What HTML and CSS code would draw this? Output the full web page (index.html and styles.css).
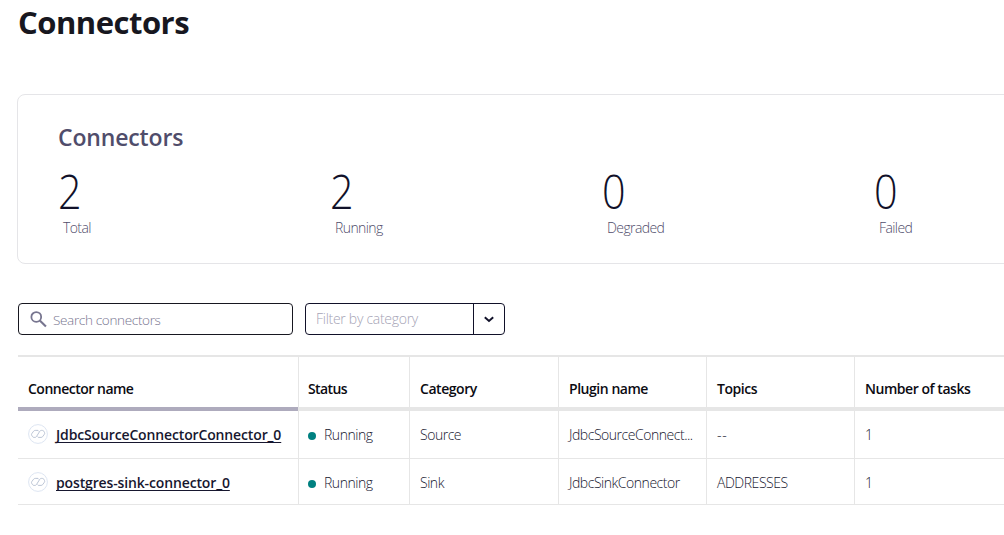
FILE: index.html
```html
<!DOCTYPE html>
<html lang="en">
<head>
<meta charset="utf-8">
<title>Connectors</title>
<link rel="stylesheet" href="styles.css">
</head>
<body>
<svg width="0" height="0" class="defs">
  <symbol id="link" viewBox="0 0 20 20">
    <circle cx="10" cy="10" r="9.4" fill="#fff" stroke="#dde5f2" stroke-width="1"/>
    <path d="M10.8 7.4 10 6.4H7.2Q6.2 6.4 5.6 7.2L3.8 9.6Q3.2 10.4 3.7 11.3L4.5 12.6Q5 13.4 6 13.4H6.9Q7.9 13.4 8.5 12.5L11.7 7.4Q12.3 6.4 13.4 6.4H14.4Q15.3 6.4 15.8 7.2L16.5 8.5Q17 9.3 16.4 10.2L14.7 12.6Q14.1 13.4 13.1 13.4H10.3L9.6 12.5" fill="none" stroke="#b4bed0" stroke-width=".9"/>
  </symbol>
</svg>
<main class="page">
  <h1 class="title">Connectors</h1>
  <section class="summary">
    <h2 class="summary-title">Connectors</h2>
    <div class="stats">
      <div class="stat"><div class="value">2</div><div class="label">Total</div></div>
      <div class="stat"><div class="value">2</div><div class="label">Running</div></div>
      <div class="stat"><div class="value">0</div><div class="label">Degraded</div></div>
      <div class="stat"><div class="value">0</div><div class="label">Failed</div></div>
    </div>
  </section>
  <div class="filters">
    <div class="search">
      <svg class="search-icon" viewBox="0 0 16 16"><circle cx="5.9" cy="5.6" r="4.6" fill="none" stroke="#77758f" stroke-width="1.7"/><path d="M9.2 9 15 14.6" stroke="#77758f" stroke-width="2"/></svg>
      <span class="placeholder">Search connectors</span>
    </div>
    <div class="select">
      <span class="select-text">Filter by category</span>
      <span class="toggle"><svg width="10" height="7" viewBox="0 0 10 7"><path d="M.8 1.2 5 5 9.2 1.2" fill="none" stroke="#111129" stroke-width="1.9"/></svg></span>
    </div>
  </div>
  <div class="table">
    <div class="row head">
      <div class="cell sorted">Connector name</div><div class="cell status">Status</div><div class="cell">Category</div><div class="cell">Plugin name</div><div class="cell">Topics</div><div class="cell">Number of tasks</div>
    </div>
    <div class="row first">
      <div class="cell"><svg class="link-icon"><use href="#link"/></svg><a class="name">JdbcSourceConnectorConnector_0</a></div><div class="cell"><i class="dot"></i>Running</div><div class="cell">Source</div><div class="cell">JdbcSourceConnect...</div><div class="cell dashes">--</div><div class="cell">1</div>
    </div>
    <div class="row second">
      <div class="cell"><svg class="link-icon"><use href="#link"/></svg><a class="name">postgres-sink-connector_0</a></div><div class="cell"><i class="dot"></i>Running</div><div class="cell">Sink</div><div class="cell">JdbcSinkConnector</div><div class="cell">ADDRESSES</div><div class="cell">1</div>
    </div>
  </div>
</main>
</body>
</html>
```
FILE: styles.css
```css
* { box-sizing: border-box; }
body { margin: 0; background: #fff; color: #17172f; font: 300 14px/20px "Open Sans", "Noto Sans", sans-serif; }
.defs { display: block; height: 0; }
.page { width: 1004px; height: 535px; overflow: hidden; padding-left: 18px; }
.title { margin: 0; height: 94px; padding-top: 1px; font-size: 31px; line-height: 42px; font-weight: 700; color: #171720; letter-spacing: -.5px; }
.summary { width: 1100px; height: 170px; margin-left: -1px; padding: 26px 0 0 40px; border: 1px solid #e5e5e8; border-radius: 8px; }
.summary-title { margin: 0; font-size: 23px; line-height: 32px; font-weight: 600; color: #504d6b; letter-spacing: -.15px; }
.stats { display: grid; grid-template-columns: repeat(4, 272px); }
.value { height: 66px; padding-top: 6px; font-size: 47px; line-height: 64px; color: #111129; transform: scaleX(.88); transform-origin: left; }
.label { padding: 2px 0 0 5px; line-height: 14px; color: #504d6b; letter-spacing: -.6px; }
.filters { display: flex; gap: 12px; margin-top: 39px; }
.search { display: flex; align-items: center; width: 275px; height: 32px; padding-left: 11px; border: 1px solid #171720; border-radius: 4px; color: #77758f; }
.search-icon { width: 17px; height: 17px; margin-right: 6px; }
.placeholder { padding-top: 2px; font-size: 13.5px; letter-spacing: -.33px; }
.select { display: flex; width: 200px; height: 32px; border: 1px solid #111129; border-radius: 4px; color: #a5a3b5; }
.select-text { width: 167px; padding: 5px 0 0 10px; letter-spacing: -.28px; }
.toggle { display: flex; flex: 1; align-items: center; justify-content: center; border-left: 1px solid #111129; }
.table { width: 986px; margin-top: 20px; border-top: 2px solid #e6e6e6; overflow: hidden; }
.row { display: grid; grid-template-columns: 280px 111px 149px 148px 148px 150px; border-bottom: 1px solid #e6e6e6; }
.cell { display: flex; align-items: center; padding: 1px 0 0 10px; white-space: nowrap; letter-spacing: -.47px; }
.cell + .cell { border-left: 1px solid #e6e6e6; }
.cell.dashes { letter-spacing: .7px; }
.head { height: 54px; border: 0; font-weight: 600; color: #0b0b12; }
.head .cell { padding-top: 14px; border-bottom: 4px solid #e6e6e6; letter-spacing: -.46px; }
.head .status { padding-left: 9px; letter-spacing: -.6px; }
.head .sorted { border-bottom-color: #aeabbd; letter-spacing: -.5px; }
.first { height: 48px; }
.second { height: 46px; }
.second .cell { padding-top: 3px; }
.name { font-weight: 600; letter-spacing: -.14px; text-decoration: underline; text-decoration-thickness: 1px; text-decoration-skip-ink: none; text-underline-offset: 2px; }
.link-icon { width: 20px; height: 20px; margin: -3px 8px 0 0; }
.dot { width: 8px; height: 8px; margin: 1px 8px 0 -1px; border-radius: 50%; background: #008080; }
```
